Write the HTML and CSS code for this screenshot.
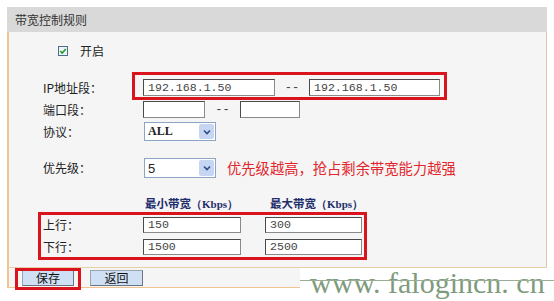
FILE: index.html
```html
<!DOCTYPE html>
<html>
<head>
<meta charset="utf-8">
<link rel="stylesheet" href="styles.css">
</head>
<body>
<div class="panel">
  <div class="title">带宽控制规则</div>
  <div class="body">
    <div class="row row-check">
      <span class="checkbox"><svg width="10" height="10" viewBox="0 0 10 10"><rect x="0.5" y="0.5" width="9" height="9" fill="#eef3f8" stroke="#4d6d8d"/><path d="M2.3 5.2 L4.2 7 L7.8 3" fill="none" stroke="#2a9a2a" stroke-width="1.6"/></svg></span>
      <span class="check-label">开启</span>
    </div>
    <div class="row row-ip">
      <span class="label">IP地址段：</span>
      <div class="ctrl">
        <span class="input w-ip">192.168.1.50</span>
        <span class="dash">--</span>
        <span class="input w-ip2">192.168.1.50</span>
      </div>
    </div>
    <div class="row row-port">
      <span class="label">端口段：</span>
      <div class="ctrl">
        <span class="input w-port"></span>
        <span class="dash dash-port">--</span>
        <span class="input w-port2"></span>
      </div>
    </div>
    <div class="row row-proto">
      <span class="label">协议：</span>
      <div class="ctrl">
        <span class="select"><span class="sel-val">ALL</span><span class="sel-btn"><svg width="8" height="6" viewBox="0 0 8 6"><path d="M1 1.5 L4 4.5 L7 1.5" fill="none" stroke="#2b4c8c" stroke-width="1.6"/></svg></span></span>
      </div>
    </div>
    <div class="row row-prio">
      <span class="label">优先级：</span>
      <div class="ctrl">
        <span class="select"><span class="sel-val">5</span><span class="sel-btn"><svg width="8" height="6" viewBox="0 0 8 6"><path d="M1 1.5 L4 4.5 L7 1.5" fill="none" stroke="#2b4c8c" stroke-width="1.6"/></svg></span></span>
        <span class="note">优先级越高，抢占剩余带宽能力越强</span>
      </div>
    </div>
    <div class="row row-head">
      <span class="label"></span>
      <div class="ctrl">
        <span class="head h-min">最小带宽<span class="kb">（Kbps）</span></span>
        <span class="head">最大带宽<span class="kb">（Kbps）</span></span>
      </div>
    </div>
    <div class="row row-up">
      <span class="label">上行：</span>
      <div class="ctrl">
        <span class="input w-bw">150</span>
        <span class="input w-bw2">300</span>
      </div>
    </div>
    <div class="row row-down">
      <span class="label">下行：</span>
      <div class="ctrl">
        <span class="input w-bw">1500</span>
        <span class="input w-bw2">2500</span>
      </div>
    </div>
  </div>
  <div class="footer">
    <span class="btn">保存</span>
    <span class="btn btn-back">返回</span>
  </div>
  <div class="mark mark-ip"></div>
  <div class="mark mark-bw"></div>
  <div class="mark mark-save"></div>
</div>
<div class="watermark">www. falogincn. cn</div>
</body>
</html>
```
FILE: styles.css
```css
html, body {
  margin: 0;
  padding: 0;
  background: #ffffff;
}
body {
  width: 554px;
  height: 301px;
  overflow: hidden;
  position: relative;
  font-family: "Noto Sans CJK SC", "DejaVu Sans", sans-serif;
  font-size: 12px;
  color: #222;
}
.panel {
  position: relative;
  margin: 7px 0 0 7px;
  width: 540px;
}
.title {
  height: 25px;
  line-height: 25px;
  background: #d9d9d9;
  padding-left: 8px;
  font-size: 12px;
  color: #333;
}
.body {
  background: #f5f5f5;
  border-left: 2px solid #f1c48f;
  border-right: 1px solid #dcc8a6;
  padding: 12px 0 12px 34px;
}
.row {
  display: grid;
  grid-template-columns: 100px 1fr;
  align-items: center;
}
.row-check {
  display: flex;
  height: 14px;
  padding-left: 15px;
}
.checkbox {
  display: flex;
  width: 10px;
  height: 10px;
}
.check-label {
  margin-left: 12px;
  line-height: 14px;
}
.label {
  line-height: 14px;
  color: #222;
}
.ctrl {
  display: flex;
  align-items: center;
  height: 100%;
}
.row-ip { margin-top: 21px; height: 17px; }
.row-port { margin-top: 5px; height: 17px; }
.row-proto { margin-top: 4px; height: 19px; }
.row-prio { margin-top: 17px; height: 20px; }
.row-head { margin-top: 18px; height: 14px; }
.row-up { margin-top: 7px; height: 16px; }
.row-down { margin-top: 6px; height: 16px; }

.input {
  box-sizing: border-box;
  display: block;
  height: 100%;
  background: #fff;
  border: 1px solid #8a8a8a;
  border-top-color: #4a4a4a;
  border-left-color: #4a4a4a;
  font-family: "Liberation Mono", "DejaVu Sans Mono", monospace;
  font-size: 11.6px;
  color: #444;
  padding-left: 4px;
  line-height: 15px;
}
.w-ip { width: 132px; }
.w-ip2 { width: 131px; }
.w-port { width: 62px; }
.w-port2 { width: 60px; }
.w-bw { width: 98px; }
.w-bw2 { width: 97px; margin-left: 24px; }
.row-up .input, .row-down .input { line-height: 14px; }
.dash {
  width: 34px;
  text-align: center;
  font-family: "Liberation Mono", monospace;
  color: #444;
}
.dash-port { width: 35px; }

.select {
  box-sizing: border-box;
  display: flex;
  align-items: center;
  width: 72px;
  height: 100%;
  background: #fff;
  border: 1px solid #8ba6c4;
  margin-left: 1px;
}
.sel-val {
  flex: 1;
  padding-left: 3px;
  font-family: "Liberation Serif", serif;
  font-weight: bold;
  font-size: 12px;
  color: #222;
}
.row-prio .sel-val {
  font-family: "Liberation Sans", sans-serif;
  font-weight: normal;
  font-size: 13px;
}
.sel-btn {
  display: flex;
  align-items: center;
  justify-content: center;
  width: 15px;
  height: calc(100% - 2px);
  margin-right: 1px;
  background: #c6d6f2;
  border-radius: 2px;
}
.note {
  margin-left: 11px;
  font-size: 14.3px;
  color: #e2262c;
  line-height: 20px;
}
.head {
  font-size: 11.5px;
  font-weight: bold;
  color: #1e2d6b;
  line-height: 14px;
}
.h-min {
  width: 125px;
  padding-left: 2px;
}
.kb {
  font-family: "Liberation Serif", serif;
  font-size: 11px;
}

.footer {
  display: flex;
  gap: 16px;
  height: 16px;
  padding: 2px 0 1px 13px;
  background: #f5f5f5;
  border-top: 1px solid #e9cfa8;
  border-left: 2px solid #f1c48f;
  border-bottom: 1px solid #f1c48f;
}
.btn {
  box-sizing: border-box;
  width: 52px;
  height: 16px;
  background: #cfe0f4;
  border: 1px solid #6c7480;
  border-top-color: #9aa4b0;
  border-left-color: #9aa4b0;
  text-align: center;
  font-size: 12px;
  line-height: 14px;
  color: #111;
}
.btn-back { width: 53px; }

.mark {
  position: absolute;
  box-sizing: border-box;
  border: 3px solid #d9141c;
}
.mark-ip { left: 125px; top: 65px; width: 315px; height: 28px; }
.mark-bw { left: 31px; top: 205px; width: 329px; height: 48px; }
.mark-save { left: 8px; top: 261px; width: 66px; height: 22px; }

.watermark {
  position: absolute;
  left: 300px;
  top: 268px;
  width: 254px;
  height: 33px;
  background: #fff;
  padding-left: 10px;
  box-sizing: border-box;
  font-family: "Liberation Serif", serif;
  font-size: 30px;
  line-height: 30px;
  color: #7f9b7e;
  white-space: nowrap;
}
.watermark::before {
  content: "";
  position: absolute;
  left: 0;
  top: 12px;
  width: 254px;
  height: 1px;
  background: #9aae96;
}
```
